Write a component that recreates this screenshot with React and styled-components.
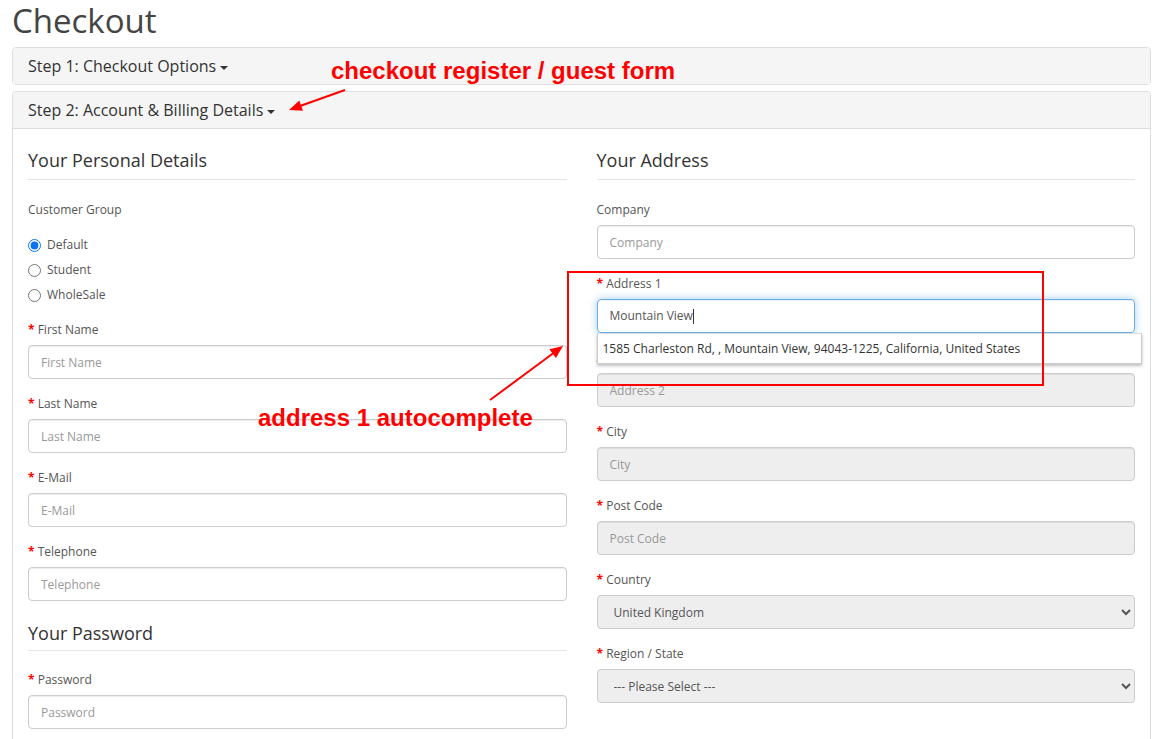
import React from 'react';
import styled, { createGlobalStyle } from 'styled-components';

const GlobalStyle = createGlobalStyle`
  body {
    margin: 0;
    background: #fff;
    font-family: "Open Sans", "Noto Sans", sans-serif;
    color: #444;
    font-size: 12px;
  }
`;

const Page = styled.div`
  position: relative;
  padding: 1px 5px 0 12px;
  height: 738px;
  overflow: hidden;
`;

const Title = styled.h1`
  margin: 0 0 6px;
  font-size: 33px;
  font-weight: 400;
  line-height: 40px;
  color: #444;
`;

const Panel = styled.div`
  border: 1px solid #ddd;
  border-radius: 4px;
  margin-bottom: 6px;
  background: #fff;
`;

const PanelHeading = styled.div`
  background: #f5f5f5;
  padding: 8px 15px;
  font-size: 16px;
  line-height: 20px;
  color: #333;
  border-radius: 3px 3px 0 0;
  border-bottom: ${p => (p.$open ? '1px solid #ddd' : 'none')};
`;

const Caret = styled.span`
  display: inline-block;
  width: 0;
  height: 0;
  margin-left: 4px;
  vertical-align: middle;
  border-top: 4px solid #333;
  border-left: 4px solid transparent;
  border-right: 4px solid transparent;
`;

const PanelBody = styled.div`
  padding: 15px;
  display: grid;
  grid-template-columns: 1fr 1fr;
  column-gap: 30px;
`;

const Column = styled.div`
  display: flex;
  flex-direction: column;
`;

const Legend = styled.h2`
  margin: 4px 0 ${p => (p.$tight ? 20 : 21)}px;
  padding-bottom: ${p => (p.$tight ? 4 : 6)}px;
  font-size: 18px;
  font-weight: 400;
  line-height: 25px;
  color: #333;
  border-bottom: 1px solid #e5e5e5;
`;

const Field = styled.div`
  position: relative;
  margin-bottom: 16px;
`;

const Label = styled.label`
  display: block;
  font-size: 12px;
  line-height: 17px;
  color: #555;
  margin-bottom: 7px;
  &::before {
    content: ${p => (p.$required ? '"* "' : 'none')};
    color: #f00;
    font-weight: 700;
  }
`;

const Input = styled.input`
  box-sizing: border-box;
  display: block;
  width: 100%;
  height: 34px;
  padding: 6px 12px;
  font-family: inherit;
  font-size: 12px;
  color: #555;
  background: ${p => (p.disabled ? '#eee' : '#fff')};
  border: 1px solid #ccc;
  border-radius: 4px;
  box-shadow: inset 0 1px 1px rgba(0,0,0,.075);
  outline: none;
  &::placeholder {
    color: #999;
  }
`;

const Select = styled.select`
  box-sizing: border-box;
  display: block;
  width: 100%;
  height: 34px;
  padding: 6px 12px;
  font-family: inherit;
  font-size: 12px;
  color: #555;
  background: #eee;
  border: 1px solid #ccc;
  border-radius: 4px;
  outline: none;
`;

const Radios = styled.div`
  display: flex;
  flex-direction: column;
  gap: 7px;
  margin: 11px 0 17px;
`;

const RadioRow = styled.label`
  display: flex;
  align-items: center;
  gap: 6px;
  font-size: 12px;
  line-height: 18px;
  color: #555;
  input {
    margin: 0;
    width: 13px;
    height: 13px;
    accent-color: #0a74f0;
  }
`;

const Suggest = styled.div`
  position: absolute;
  left: 0;
  right: -7px;
  top: 58px;
  z-index: 2;
  background: #fff;
  border: 1px solid #ccc;
  border-top-color: #ddd;
  box-shadow: 0 2px 3px rgba(0,0,0,.25);
  padding: 6px 5px;
  font-size: 12px;
  line-height: 17px;
  color: #333;
`;

const TextCaret = styled.span`
  display: inline-block;
  width: 1px;
  height: 15px;
  background: #333;
  vertical-align: middle;
`;

const FocusedInput = styled.div`
  box-sizing: border-box;
  height: 34px;
  padding: 7px 12px;
  font-size: 12px;
  line-height: 18px;
  color: #555;
  border: 1px solid #66afe9;
  border-radius: 4px;
  box-shadow: inset 0 1px 1px rgba(0,0,0,.075), 0 0 8px rgba(102,175,233,.6);
`;

const Note = styled.div`
  position: absolute;
  left: ${p => p.$x}px;
  top: ${p => p.$y}px;
  font-family: "Liberation Sans", Arial, sans-serif;
  font-weight: 700;
  font-size: 24px;
  line-height: 28px;
  color: #f00;
  white-space: nowrap;
  z-index: 5;
`;

const Frame = styled.div`
  position: absolute;
  left: 567px;
  top: 271px;
  width: 473px;
  height: 111px;
  border: 2px solid #f00;
  z-index: 4;
  pointer-events: none;
`;

const Arrows = styled.svg`
  position: absolute;
  left: 0;
  top: 0;
  z-index: 5;
  pointer-events: none;
`;

function Arrow({ x1, y1, x2, y2 }) {
  const a = Math.atan2(y2 - y1, x2 - x1);
  const len = 14;
  const w = 0.4;
  const p1 = [x2 - len * Math.cos(a - w), y2 - len * Math.sin(a - w)];
  const p2 = [x2 - len * Math.cos(a + w), y2 - len * Math.sin(a + w)];
  return (
    <g>
      <line x1={x1} y1={y1} x2={x2 - 8 * Math.cos(a)} y2={y2 - 8 * Math.sin(a)} stroke="#f00" strokeWidth="2" />
      <polygon points={`${x2},${y2} ${p1.join(',')} ${p2.join(',')}`} fill="#f00" />
    </g>
  );
}

function TextField({ label, required = true, disabled }) {
  return (
    <Field>
      <Label $required={required}>{label}</Label>
      <Input placeholder={label} disabled={disabled} />
    </Field>
  );
}

export default function App() {
  return (
    <Page>
      <GlobalStyle />
      <Title>Checkout</Title>
      <Panel>
        <PanelHeading>
          Step 1: Checkout Options<Caret />
        </PanelHeading>
      </Panel>
      <Panel>
        <PanelHeading $open>
          Step 2: Account &amp; Billing Details<Caret />
        </PanelHeading>
        <PanelBody>
          <Column>
            <Legend>Your Personal Details</Legend>
            <Label>Customer Group</Label>
            <Radios>
              <RadioRow><input type="radio" name="cg" defaultChecked />Default</RadioRow>
              <RadioRow><input type="radio" name="cg" />Student</RadioRow>
              <RadioRow><input type="radio" name="cg" />WholeSale</RadioRow>
            </Radios>
            <TextField label="First Name" />
            <TextField label="Last Name" />
            <TextField label="E-Mail" />
            <TextField label="Telephone" />
            <Legend $tight>Your Password</Legend>
            <TextField label="Password" />
          </Column>
          <Column>
            <Legend>Your Address</Legend>
            <TextField label="Company" required={false} />
            <Field>
              <Label $required>Address 1</Label>
              <FocusedInput>Mountain View<TextCaret /></FocusedInput>
              <Suggest>1585 Charleston Rd, , Mountain View, 94043-1225, California, United States</Suggest>
            </Field>
            <TextField label="Address 2" required={false} disabled />
            <TextField label="City" disabled />
            <TextField label="Post Code" disabled />
            <Field>
              <Label $required>Country</Label>
              <Select defaultValue="uk">
                <option value="uk">United Kingdom</option>
              </Select>
            </Field>
            <Field>
              <Label $required>Region / State</Label>
              <Select defaultValue="">
                <option value="">--- Please Select ---</option>
              </Select>
            </Field>
          </Column>
        </PanelBody>
      </Panel>

      <Frame />
      <Note $x={331} $y={57}>checkout register / guest form</Note>
      <Note $x={258} $y={404}>address 1 autocomplete</Note>
      <Arrows width="1156" height="739">
        <Arrow x1={345} y1={90} x2={289} y2={110} />
        <Arrow x1={490} y1={400} x2={563} y2={346} />
      </Arrows>
    </Page>
  );
}
